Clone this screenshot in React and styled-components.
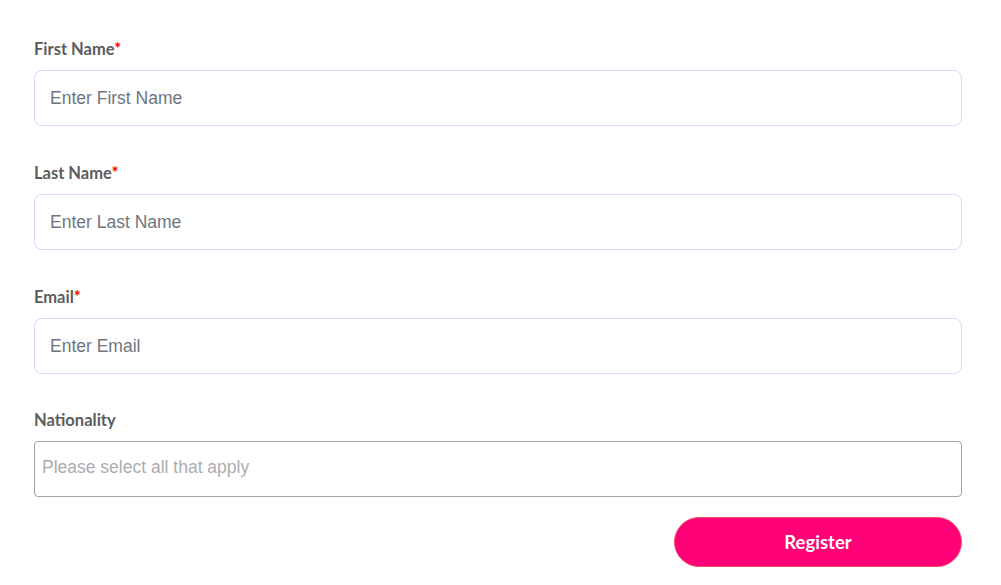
import styled, { createGlobalStyle } from "styled-components";

const GlobalStyle = createGlobalStyle`
    body {
        margin: 0;
        background: #ffffff;
        font-family: Lato, "Open Sans", sans-serif;
    }
`;

const Container = styled.div`
    width: 1001px;
    height: 585px;
    box-sizing: border-box;
    padding: 39px 39px 0 34px;
    display: flex;
    flex-direction: column;
`;

const Field = styled.div`
    display: flex;
    flex-direction: column;
    margin-bottom: ${(p) => p.$space || 37}px;
`;

const Label = styled.label`
    font-family: Lato, sans-serif;
    font-weight: 700;
    font-size: 16.5px;
    line-height: 20px;
    color: #5c5c5c;
    margin-bottom: 11px;
`;

const Star = styled.span`
    color: #ff0000;
`;

const Input = styled.input`
    box-sizing: border-box;
    width: 928px;
    height: 56px;
    border: 1px solid #ddd6fb;
    border-radius: 8px;
    padding: 1px 15px 0;
    font-family: "Liberation Sans", Arial, sans-serif;
    font-size: 17.5px;
    color: #333;
    background: #fff;
    &::placeholder {
        color: #6f7580;
    }
    &:focus {
        outline: none;
    }
`;

const Select = styled(Input)`
    border: 1px solid #a3a3a3;
    border-radius: 4px;
    padding: 0 7px 3px;
    &::placeholder {
        color: #acacb0;
    }
`;

const Actions = styled.div`
    width: 928px;
    display: flex;
    justify-content: flex-end;
`;

const Button = styled.button`
    width: 288px;
    height: 50px;
    border: 1px solid #f0506a;
    border-radius: 25px;
    background: #ff0076;
    color: #ffffff;
    font-family: Lato, sans-serif;
    font-weight: 700;
    font-size: 18.5px;
    cursor: pointer;
`;

const App = () => {
    return (
        <>
            <GlobalStyle />
            <Container>
                <Field>
                    <Label>
                        First Name<Star>*</Star>
                    </Label>
                    <Input placeholder="Enter First Name" />
                </Field>
                <Field>
                    <Label>
                        Last Name<Star>*</Star>
                    </Label>
                    <Input placeholder="Enter Last Name" />
                </Field>
                <Field $space={36}>
                    <Label>
                        Email<Star>*</Star>
                    </Label>
                    <Input placeholder="Enter Email" type="email" />
                </Field>
                <Field $space={20}>
                    <Label>Nationality</Label>
                    <Select placeholder="Please select all that apply" />
                </Field>
                <Actions>
                    <Button>Register</Button>
                </Actions>
            </Container>
        </>
    );
};

export default App;
